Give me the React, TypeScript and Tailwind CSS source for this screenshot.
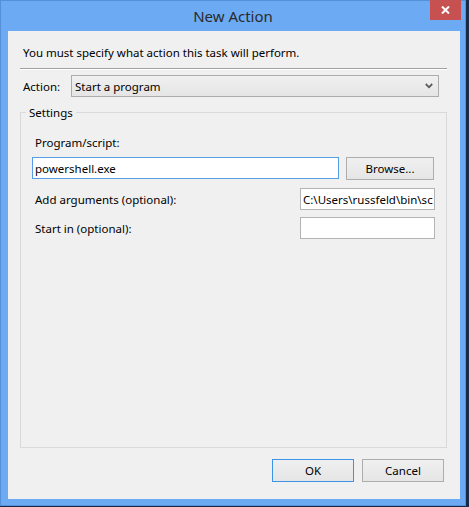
import React from 'react';

// --- Small pieces ---
function WinButton({ label, isDefault }: { label: string; isDefault?: boolean }) {
    return (
        <button
            className={`w-[82px] h-[23px] border bg-gradient-to-b from-[#f0f0f0] to-[#e5e5e5] text-black text-[11.5px] leading-none pt-[1px] ${
                isDefault ? 'border-[#3c94ea]' : 'border-[#adadad]'
            }`}
        >
            {label}
        </button>
    );
}

function TextBox({ value, focused, className }: { value: string; focused?: boolean; className: string }) {
    return (
        <div
            className={`h-[22px] bg-white border flex items-center px-[2px] pt-[1px] overflow-hidden whitespace-nowrap text-[11.5px] text-black ${
                focused ? 'border-[#569de5]' : 'border-[#b4b4b4]'
            } ${className}`}
        >
            {value}
        </div>
    );
}

// --- Dialog ---
export default function App() {
    return (
        <div
            className="w-[469px] h-[507px] bg-[#1b2a44] overflow-hidden"
            style={{ fontFamily: '"Noto Sans", "Open Sans", sans-serif' }}
        >
            <div className="relative w-[466px] h-[506px] bg-[#6caaf3] border border-[#5690d8] flex flex-col">
                {/* Title bar */}
                <div className="h-[30px] flex items-center justify-center text-[15px] text-[#2a2a2a]">
                    New Action
                </div>
                <div className="absolute top-[-1px] right-[4px] w-[31px] h-[20px] bg-[#c75050] flex items-center justify-center">
                    <svg width="9" height="8" viewBox="0 0 9 8">
                        <path d="M1 0.5 L8 7.5 M8 0.5 L1 7.5" stroke="#fff" strokeWidth="2" />
                    </svg>
                </div>

                {/* Client area */}
                <div className="ml-[7px] mr-[5px] h-[468px] bg-[#f0f0f0] pl-[12px] flex flex-col text-[11.5px] text-black leading-[16px]">
                    <p className="mt-[14px] ml-[3px]">You must specify what action this task will perform.</p>

                    <div className="mt-[7px] w-[427px] border-t border-[#a0a0a0] border-b border-b-white" />

                    {/* Action */}
                    <div className="mt-[5px] h-[22px] flex items-center">
                        <span className="ml-[3px] w-[48px] pt-[1px]">Action:</span>
                        <div className="w-[368px] h-[22px] border border-[#acacac] bg-gradient-to-b from-[#f0f0f0] to-[#e5e5e5] flex items-center justify-between pl-[3px] pr-[5px]">
                            <span className="pt-[1px]">Start a program</span>
                            <svg width="8" height="6" viewBox="0 0 8 6">
                                <path d="M0.8 1 L4 4.3 L7.2 1" stroke="#5a5a5a" strokeWidth="1.8" fill="none" />
                            </svg>
                        </div>
                    </div>

                    {/* Settings group */}
                    <fieldset className="mt-[7px] w-[427px] h-[344px] border border-[#d9d9d9] flex flex-col">
                        <legend className="ml-[5px] px-[3px] pt-[1px]">Settings</legend>

                        <span className="mt-[14px] ml-[14px]">Program/script:</span>
                        <div className="mt-[6px] ml-[11px] flex items-start gap-[7px]">
                            <TextBox value="powershell.exe" focused className="w-[307px]" />
                            <button className="w-[88px] h-[23px] border border-[#adadad] bg-gradient-to-b from-[#f0f0f0] to-[#e5e5e5] text-[11.5px] leading-none pt-[1px]">
                                Browse...
                            </button>
                        </div>

                        <div className="mt-[8px] ml-[14px] mr-[11px] flex items-center justify-between">
                            <span className="pt-[1px]">Add arguments (optional):</span>
                            <TextBox value="C:\Users\russfeld\bin\sc" className="w-[135px]" />
                        </div>

                        <div className="mt-[7px] ml-[14px] mr-[11px] flex items-center justify-between">
                            <span className="pt-[1px]">Start in (optional):</span>
                            <TextBox value="" className="w-[135px]" />
                        </div>
                    </fieldset>

                    {/* Buttons */}
                    <div className="mt-[11px] mr-[16px] flex justify-end gap-[8px]">
                        <WinButton label="OK" isDefault />
                        <WinButton label="Cancel" />
                    </div>
                </div>
            </div>
        </div>
    );
}
